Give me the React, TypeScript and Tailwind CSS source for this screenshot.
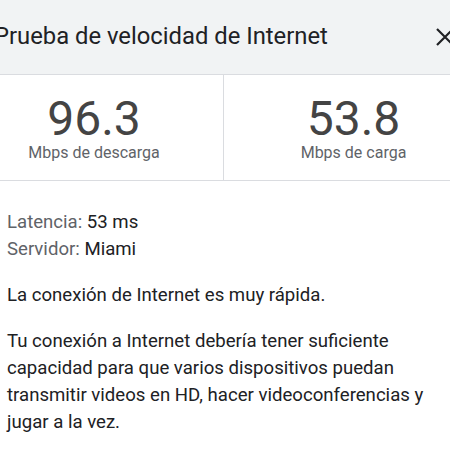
export default function App() {
  return (
    <div className="w-[450px] h-[450px] overflow-hidden bg-white font-['Roboto',sans-serif]">
      <div className="ml-[-35px] w-[518px]">
        <div className="h-[75px] bg-[#f1f3f4] border-b border-[#dadce0] flex items-center justify-between pl-[29px] pr-[29px]">
          <h1 className="text-[23.8px] text-[#202124] font-normal leading-none">Prueba de velocidad de Internet</h1>
          <svg width="18" height="18" viewBox="0 0 18 18" className="text-[#202124]">
            <path d="M1 1L17 17M17 1L1 17" stroke="currentColor" strokeWidth="2.2" />
          </svg>
        </div>

        <div className="grid grid-cols-2 h-[106px] border-b border-[#dadce0]">
          <div className="flex flex-col items-center pt-[20px] border-r border-[#dadce0]">
            <div className="text-[48px] leading-[48px] text-[#444]">96.3</div>
            <div className="text-[16px] leading-[20px] text-[#5f6368]">Mbps de descarga</div>
          </div>
          <div className="flex flex-col items-center pt-[20px]">
            <div className="text-[48px] leading-[48px] text-[#444]">53.8</div>
            <div className="text-[16px] leading-[20px] text-[#5f6368]">Mbps de carga</div>
          </div>
        </div>

        <div className="pl-[42px] pr-[48px] pt-[28px] text-[18.6px] leading-[27px] text-[#202124]">
          <div>
            <span className="text-[#5f6368]">Latencia: </span>53 ms
          </div>
          <div>
            <span className="text-[#5f6368]">Servidor: </span>Miami
          </div>
          <p className="mt-[19px]">La conexión de Internet es muy rápida.</p>
          <p className="mt-[19px]">
            Tu conexión a Internet debería tener suficiente capacidad para que varios dispositivos puedan transmitir videos en HD, hacer videoconferencias y jugar a la vez.
          </p>
        </div>
      </div>
    </div>
  );
}
